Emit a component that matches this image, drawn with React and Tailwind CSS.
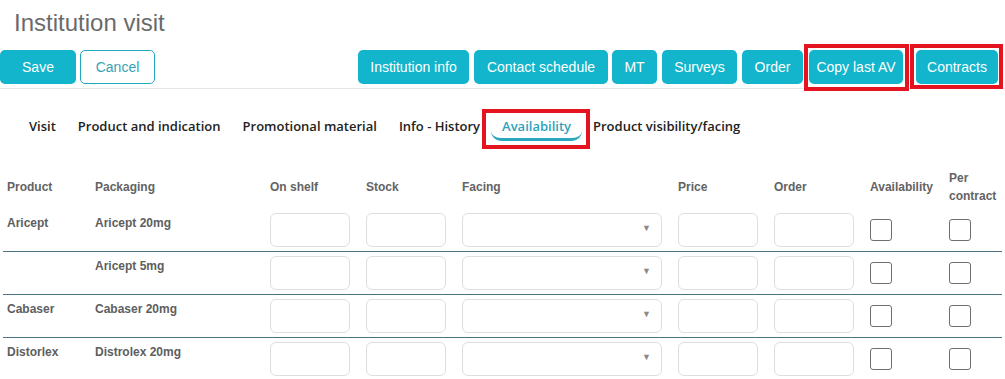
import React from "react";

const topButtons = [
  { label: "Institution info", w: "w-[111px]", ml: "ml-0" },
  { label: "Contact schedule", w: "w-[134px]", ml: "ml-[5px]" },
  { label: "MT", w: "w-[45px]", ml: "ml-[4px]" },
  { label: "Surveys", w: "w-[75px]", ml: "ml-[5px]" },
  { label: "Order", w: "w-[61px]", ml: "ml-[5px]" },
];

const tabs = [
  "Visit",
  "Product and indication",
  "Promotional material",
  "Info - History",
  "Availability",
  "Product visibility/facing",
];

const rows = [
  { product: "Aricept", pack: "Aricept 20mg" },
  { product: "", pack: "Aricept 5mg" },
  { product: "Cabaser", pack: "Cabaser 20mg" },
  { product: "Distorlex", pack: "Distrolex 20mg" },
];

const cols =
  "grid grid-cols-[88px_175px_96px_96px_216px_96px_96px_79px_1fr]";

const Input = ({ wide }) => (
  <div
    className={`${wide ? "w-[200px]" : "w-[80px]"} h-[34px] rounded-[6px] border border-[#dedede] bg-white relative`}
  >
    {wide && (
      <span className="absolute right-[10px] top-[10px] text-[9px] leading-none text-[#8a8a8a]">
        ▼
      </span>
    )}
  </div>
);

const Check = () => (
  <div className="mt-[6px] w-[22px] h-[22px] rounded-[3px] border border-[#6f6f6f] bg-white" />
);

export default function App() {
  return (
    <div className="w-[1005px] h-[379px] overflow-hidden bg-white font-['Liberation_Sans',Arial,sans-serif]">
      <h1 className="pl-[14px] pt-[9px] text-[24px] leading-[28px] font-normal text-[#6a6a6a]">
        Institution visit
      </h1>

      <div className="mt-[13px] flex h-[34px]">
        <button className="w-[76px] h-[34px] rounded-[5px] bg-[#12b5cb] text-white text-[14px]">
          Save
        </button>
        <button className="ml-[4px] w-[75px] h-[34px] rounded-[5px] border border-[#1fa9bf] bg-white text-[#3aa2b6] text-[14px]">
          Cancel
        </button>

        <div className="ml-auto mr-[7px] flex">
          {topButtons.map((b) => (
            <button
              key={b.label}
              className={`${b.w} ${b.ml} h-[34px] rounded-[5px] bg-[#12b5cb] text-white text-[14px]`}
            >
              {b.label}
            </button>
          ))}
          <div className="relative ml-[6px]">
            <button className="w-[94px] h-[34px] rounded-[5px] bg-[#12b5cb] text-white text-[14px]">
              Copy last AV
            </button>
            <span className="absolute -left-[5px] -right-[6px] -top-[6px] -bottom-[7px] border-4 border-[#e3141f]" />
          </div>
          <div className="relative ml-[13px]">
            <button className="w-[82px] h-[34px] rounded-[5px] bg-[#12b5cb] text-white text-[14px]">
              Contracts
            </button>
            <span className="absolute -left-[6px] -right-[5px] -top-[6px] -bottom-[5px] border-4 border-[#e3141f]" />
          </div>
        </div>
      </div>

      <div className="mt-[4px] border-t border-[#e6e6e6]" />

      <div className="flex pl-[18px] font-['Open_Sans',sans-serif] text-[13px] font-semibold">
        {tabs.map((t) => {
          const active = t === "Availability";
          return (
            <div
              key={t}
              className={`relative px-[11px] pt-[28px] pb-[3px] leading-[18px] rounded-[10px] border-b-[3px] ${
                active
                  ? "border-[#2aa8bf] text-[#2ba3bd]"
                  : "border-transparent text-[#222]"
              }`}
            >
              {t}
              {active && (
                <span className="absolute -left-[9px] -right-[8px] top-[20px] -bottom-[11px] border-4 border-[#e3141f]" />
              )}
            </div>
          );
        })}
      </div>

      <div className="mx-[3px] mt-[28px]">
        <div
          className={`${cols} pl-[4px] h-[36px] items-center text-[12px] font-bold leading-[18px] text-[#636363]`}
        >
          <div>Product</div>
          <div>Packaging</div>
          <div>On shelf</div>
          <div>Stock</div>
          <div>Facing</div>
          <div>Price</div>
          <div>Order</div>
          <div>Availability</div>
          <div>
            Per
            <br />
            contract
          </div>
        </div>

        <div className="mt-[4px]">
          {rows.map((r, i) => (
            <div
              key={i}
              className={`${cols} pl-[4px] py-[4px] ${
                i < rows.length - 1 ? "border-b border-[#4f7386]" : ""
              } text-[12px] font-bold leading-[16px] text-[#5e5e5e]`}
            >
              <div className="pt-[2px]">{r.product}</div>
              <div className="pt-[2px]">{r.pack}</div>
              <Input />
              <Input />
              <Input wide />
              <Input />
              <Input />
              <Check />
              <Check />
            </div>
          ))}
        </div>
      </div>
    </div>
  );
}
